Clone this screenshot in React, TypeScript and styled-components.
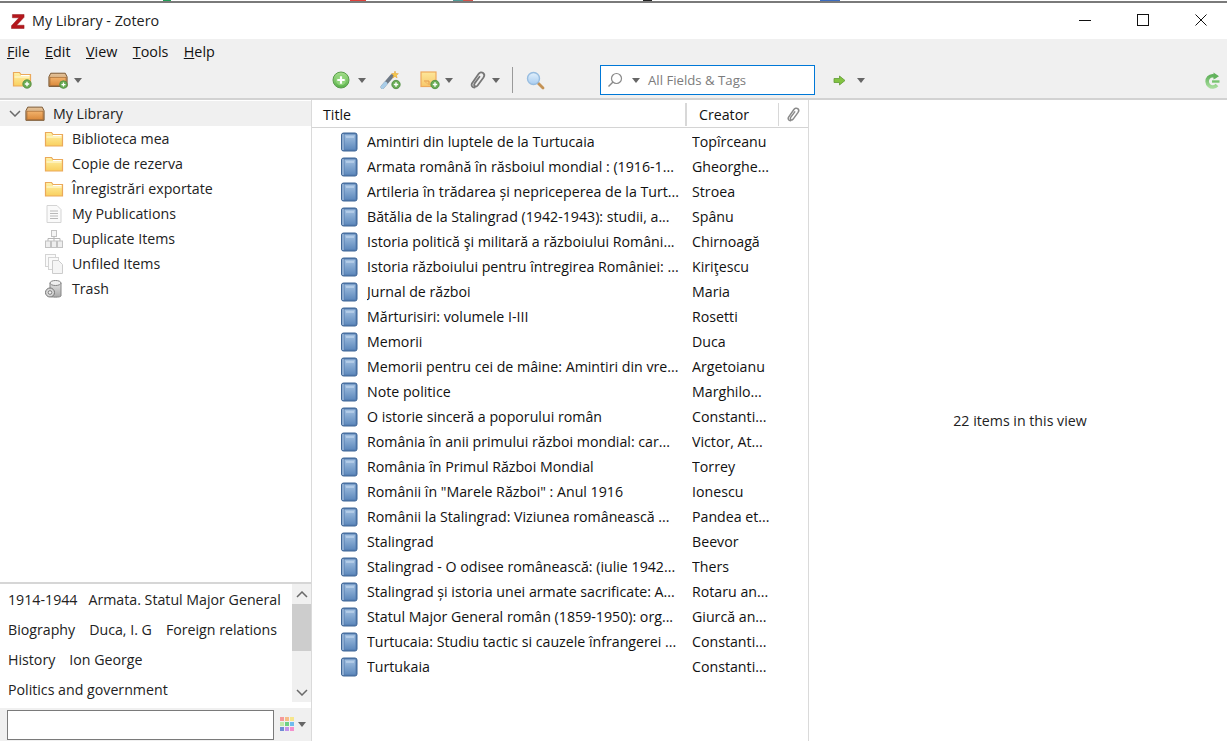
import React from "react";
import styled, { createGlobalStyle } from "styled-components";

const Global = createGlobalStyle`
  html, body { margin: 0; padding: 0; background: #fff; }
  body { font-family: "Open Sans", "Noto Sans", "Liberation Sans", sans-serif; color: #1a1a1a; overflow: hidden; }
  * { box-sizing: border-box; }
`;

const Window = styled.div`
  width: 1227px; height: 741px; display: flex; flex-direction: column; overflow: hidden; background: #fff;
`;
const TopEdge = styled.div`
  height: 3px; flex: none; background: #fff; border-bottom: 2px solid #7a7a7a; display: flex;
`;
const EdgeBit = styled.span<{ $w: number; $c?: string }>`
  width: ${(p) => p.$w}px; height: 1px; flex: none; background: ${(p) => p.$c ?? "transparent"};
`;
const TitleBar = styled.div`
  height: 36px; flex: none; display: flex; align-items: center; padding: 0 0 0 11px; background: #fff;
`;
const TitleText = styled.div`
  margin-left: 7px; font-size: 14.35px; color: #222; flex: 1; margin-top: -1px;
`;
const WinButtons = styled.div`
  display: flex; align-items: center; margin-right: 20px; gap: 46px; margin-top: -2px;
`;
const Menu = styled.div`
  height: 26px; flex: none; display: flex; align-items: center; padding: 0 0 2px 7px; gap: 15.4px; background: #f0f0f0;
  font-size: 14.35px; color: #111;
`;
const MenuItem = styled.span`
  &::first-letter { text-decoration: underline; }
`;
const Toolbar = styled.div`
  height: 35px; flex: none; display: flex; align-items: center; background: #f0f0f0; border-bottom: 2px solid #d2d2d2; padding-bottom: 3px;
`;
const ToolGroup = styled.div<{ $w: number; $pl?: number }>`
  width: ${(p) => p.$w}px; flex: none; display: flex; align-items: center; padding-left: ${(p) => p.$pl ?? 0}px; height: 100%;
`;
const ToolIcon = styled.div<{ $mr?: number }>`
  display: flex; align-items: center; margin-right: ${(p) => p.$mr ?? 0}px;
`;
const Spacer = styled.div`
  flex: 1;
`;
const Caret = styled.span<{ $mr?: number; $ml?: number }>`
  width: 0; height: 0; flex: none; border-left: 4.5px solid transparent; border-right: 4.5px solid transparent; border-top: 5px solid #666;
  margin-left: ${(p) => p.$ml ?? 6}px; margin-right: ${(p) => p.$mr ?? 0}px;
`;
const Divider = styled.span`
  width: 1px; height: 26px; background: #9a9a9a; margin: 0 13px 0 0; flex: none;
`;
const SearchBox = styled.div`
  width: 215px; height: 30px; flex: none; border: 1px solid #0078d7; background: #fff; display: flex; align-items: center; padding-left: 6px;
  font-size: 13.2px; color: #7c7c7c; margin-right: 18px;
`;
const Body = styled.div`
  flex: 1; min-height: 0; display: flex;
`;
const Left = styled.div`
  width: 312px; flex: none; border-right: 1px solid #dadada; display: flex; flex-direction: column;
`;
const Tree = styled.div`
  flex: 1; min-height: 0; padding-top: 1px;
`;
const LibRow = styled.div`
  height: 25px; background: #f0f0f0; display: flex; align-items: center; padding-left: 9px; font-size: 14.2px; color: #222;
`;
const ChevronGap = styled.span`
  width: 4px; flex: none;
`;
const TreeRow = styled.div`
  height: 25px; display: flex; align-items: center; padding-left: 44px; font-size: 14.2px; color: #222;
`;
const RowLabel = styled.span`
  margin-left: 8px;
`;
const TagPane = styled.div`
  height: 159px; flex: none; border-top: 2px solid #d6d6d6; display: flex; flex-direction: column;
`;
const TagArea = styled.div`
  height: 124px; flex: none; display: flex; background: #fff;
`;
const TagList = styled.div`
  width: 292px; flex: none; padding-left: 8px; font-size: 14.2px; color: #222;
`;
const TagLine = styled.div<{ $gap: number }>`
  height: 30px; display: flex; align-items: center; gap: ${(p) => p.$gap}px; white-space: nowrap;
`;
const Scrollbar = styled.div`
  width: 19px; height: 118px; flex: none; background: #f0f0f0; display: flex; flex-direction: column; justify-content: space-between; position: relative;
`;
const ScrollThumb = styled.div`
  position: absolute; left: 0; right: 0; top: 20px; height: 47px; background: #cdcdcd;
`;
const ScrollArrow = styled.div`
  height: 20px; display: flex; align-items: center; justify-content: center;
`;
const TagBottom = styled.div`
  flex: 1; display: flex; align-items: center; background: #f0f0f0; padding-left: 7px;
`;
const TagInput = styled.div`
  width: 267px; height: 30px; background: #fff; border: 1px solid #7a7a7a; margin-right: 6px;
`;
const Middle = styled.div`
  width: 497px; flex: none; border-right: 1px solid #dadada; display: flex; flex-direction: column;
`;
const HeadRow = styled.div`
  height: 28px; flex: none; border-bottom: 1px solid #d4d4d4; display: flex; align-items: center; font-size: 14.2px; color: #111; padding-top: 2px;
`;
const HeadTitle = styled.div`
  width: 375px; flex: none; padding-left: 11px; height: 23px; display: flex; align-items: center; border-right: 2px solid #d8d8d8;
`;
const HeadCreator = styled.div`
  width: 92px; flex: none; padding-left: 12px; height: 23px; display: flex; align-items: center; border-right: 1px solid #d8d8d8;
`;
const HeadClip = styled.div`
  flex: 1; display: flex; align-items: center; justify-content: center;
`;
const Rows = styled.div`
  flex: 1; padding-top: 1px;
`;
const Row = styled.div`
  height: 25px; display: flex; align-items: center; padding-left: 28px; font-size: 14.2px; color: #111; white-space: nowrap;
`;
const RowTitle = styled.span`
  width: 325px; flex: none; margin-left: 9px; overflow: hidden;
`;
const RowCreator = styled.span`
  flex: 1; overflow: hidden;
`;
const Right = styled.div`
  flex: 1; display: flex; align-items: center; justify-content: center; font-size: 14.2px; color: #222; padding: 0 0 1px 4px;
`;

const Svg = styled.svg`
  display: block; flex: none;
`;

const Grad = ({ id, a, b }: { id: string; a: string; b: string }) => (
  <linearGradient id={id} x1="0" y1="0" x2="0" y2="1">
    <stop offset="0" stopColor={a} />
    <stop offset="1" stopColor={b} />
  </linearGradient>
);

const PlusBadge = ({ x = 11, y = 11 }: { x?: number; y?: number }) => (
  <g>
    <circle cx={x} cy={y} r="4.2" fill="#6aac55" stroke="#4b8a3e" strokeWidth="0.8" />
    <path d={`M${x - 2.2} ${y}h4.4M${x} ${y - 2.2}v4.4`} stroke="#fff" strokeWidth="1.4" />
  </g>
);

const FolderIcon = ({ plus }: { plus?: boolean }) => (
  <Svg width={20} height={plus ? 18 : 16} viewBox={plus ? "0 0 20 18" : "0 0 20 16"}>
    <defs><Grad id="fold" a="#fff3a8" b="#f9cf5e" /></defs>
    <path d="M1.500 1.500h6l1.500 2h9.500v11.500h-17z" fill="url(#fold)" stroke="#eba95a" strokeWidth="1.200" />
    <path d="M2.500 6h15" stroke="#fffbe0" strokeWidth="1" />
    <path d="M9 4.500h8.500" stroke="#fff" strokeWidth="1" />
    {plus && <PlusBadge x={15} y={13} />}
  </Svg>
);

const BoxIcon = ({ plus }: { plus?: boolean }) => (
  <Svg width={20} height={plus ? 19 : 17} viewBox={plus ? "0 0 22 19" : "0 0 22 17"}>
    <defs>
      <Grad id="boxa" a="#e7c49a" b="#b98a55" />
      <Grad id="boxb" a="#f2b36d" b="#db8a3c" />
    </defs>
    <path d="M3 1.500h16l2 4v10.500H1V5.500z" fill="url(#boxa)" stroke="#7d5a35" strokeWidth="1.100" />
    <rect x="2.200" y="6" width="17.600" height="9" fill="url(#boxb)" stroke="#a66a32" strokeWidth="0.700" />
    {plus && <PlusBadge x={17} y={14} />}
  </Svg>
);

const AddItemIcon = () => (
  <Svg width="18" height="18" viewBox="0 0 18 18">
    <defs><Grad id="addg" a="#a6e08c" b="#58b04a" /></defs>
    <circle cx="9" cy="9" r="8" fill="url(#addg)" stroke="#5a9c4c" strokeWidth="1" />
    <circle cx="9" cy="9" r="5.200" fill="#8fd47a" />
    <path d="M5.300 9h7.400M9 5.300v7.400" stroke="#fff" strokeWidth="2.200" />
  </Svg>
);

const WandIcon = () => (
  <Svg width="22" height="20" viewBox="0 0 22 20">
    <path d="M2.500 17L12 6" stroke="#6d7885" strokeWidth="3.800" strokeLinecap="round" />
    <path d="M2.500 17L5.500 13.600" stroke="#a9cde8" strokeWidth="3.800" strokeLinecap="round" />
    <path d="M15 1l.8 2.500 2.600.2-2 1.600.7 2.600-2.100-1.500-2.200 1.400.8-2.500-2-1.700 2.600-.1z" fill="#f4c84a" stroke="#e09b2d" strokeWidth="0.500" />
    <PlusBadge x={16} y={14.500} />
  </Svg>
);

const NoteIcon = () => (
  <Svg width="21" height="19" viewBox="0 0 21 19">
    <defs><Grad id="noteg" a="#fde79b" b="#f8c86a" /></defs>
    <rect x="1" y="1" width="15" height="14.500" fill="url(#noteg)" stroke="#eeaa5c" strokeWidth="1.200" />
    <path d="M4 10h5v4" fill="none" stroke="#e39a4c" strokeWidth="1" />
    <path d="M4 10l5 4" stroke="#f2b565" strokeWidth="1" />
    <PlusBadge x={15} y={13.500} />
  </Svg>
);

const ClipIcon = ({ size = 18, c = "#777" }: { size?: number; c?: string }) => (
  <Svg width={size} height={size} viewBox="0 0 18 18">
    <path d="M5.500 16.500c-2.200 0-3.600-2-2.600-4L9.500 3c1.200-1.800 3.200-2.100 4.600-1 1.400 1.100 1.500 2.900.4 4.500L8.600 14.500c-.8 1-2 1.200-2.800.6-.8-.6-.8-1.700-.2-2.700L10.500 5.800" fill="none" stroke={c} strokeWidth="1.800" strokeLinecap="round" strokeLinejoin="round" />
  </Svg>
);

const MagnifyIcon = () => (
  <Svg width="19" height="19" viewBox="0 0 19 19">
    <defs><Grad id="magg" a="#e3f1fc" b="#a8ccf0" /></defs>
    <path d="M11.500 11.500L17 17" stroke="#c49255" strokeWidth="2.800" strokeLinecap="round" />
    <circle cx="7.500" cy="7.500" r="6" fill="url(#magg)" stroke="#98bde0" strokeWidth="1.400" />
  </Svg>
);

const SearchGlass = () => (
  <Svg width="16" height="16" viewBox="0 0 16 16">
    <circle cx="9.500" cy="6.500" r="5" fill="none" stroke="#8a8a8a" strokeWidth="1.200" />
    <path d="M6 10L1.500 14.500" stroke="#8a8a8a" strokeWidth="1.400" />
  </Svg>
);

const ArrowIcon = () => (
  <Svg width="13" height="11" viewBox="0 0 13 11">
    <path d="M1 3.500h5.500V1L12 5.500 6.500 10V7.500H1z" fill="#82c341" stroke="#5f9a35" strokeWidth="0.800" />
  </Svg>
);

const SyncIcon = () => (
  <Svg width="16" height="17" viewBox="0 0 16 17">
    <defs><Grad id="syncg" a="#62b25c" b="#a5dc9a" /></defs>
    <path d="M12.600 5.300A5.600 5.600 0 1 0 13 13" fill="none" stroke="url(#syncg)" strokeWidth="3.600" />
    <path d="M9.500 0.500l5.500 3.800-5.500 3.200z" fill="#62b25c" />
    <path d="M8 9.500h7.500" stroke="#78c46f" strokeWidth="2.400" />
  </Svg>
);

const ZoteroLogo = () => (
  <Svg width="14" height="17" viewBox="0 0 15 17">
    <path d="M1.500 1h12.500v3L6 12.500h8V16H0.500v-3L8.500 4.500H1.500z" fill="#b5171c" stroke="#8f1014" strokeWidth="0.500" />
  </Svg>
);

const DocIcon = () => (
  <Svg width="20" height="20" viewBox="0 0 20 20">
    <path d="M3 1.500h10l4 4v13H3z" fill="#fafafa" stroke="#d4d4d4" strokeWidth="1" />
    <path d="M6 7h8M6 9.500h8M6 12h8M6 14.500h8" stroke="#b8b8b8" strokeWidth="1" />
  </Svg>
);

const DupIcon = () => (
  <Svg width="20" height="20" viewBox="0 0 20 20">
    <rect x="7.500" y="1.500" width="5" height="6" fill="#f5f5f5" stroke="#c2c2c2" />
    <path d="M4 12V9.500h12V12M10 7.500V12" fill="none" stroke="#b5b5b5" />
    <rect x="1.500" y="12" width="5" height="6.500" fill="#eee" stroke="#c2c2c2" />
    <rect x="7.500" y="12" width="5" height="6.500" fill="#eee" stroke="#c2c2c2" />
    <rect x="13.500" y="12" width="5" height="6.500" fill="#eee" stroke="#c2c2c2" />
  </Svg>
);

const UnfiledIcon = () => (
  <Svg width="20" height="20" viewBox="0 0 20 20">
    <rect x="1.500" y="0.500" width="10" height="12" fill="#fafafa" stroke="#d4d4d4" />
    <rect x="4.500" y="3.500" width="10" height="12" fill="#fafafa" stroke="#d4d4d4" />
    <path d="M8.500 6.500h6l4 4v9h-10z" fill="#f5f5f5" stroke="#cccccc" />
  </Svg>
);

const TrashIcon = () => (
  <Svg width="20" height="20" viewBox="0 0 20 20">
    <defs><Grad id="trg" a="#e2e2e2" b="#a8a8a8" /></defs>
    <path d="M6 4v13c0 1.500 11 1.500 11 0V4z" fill="url(#trg)" stroke="#858585" />
    <ellipse cx="11.500" cy="4" rx="5.500" ry="2.500" fill="#efefef" stroke="#858585" />
    <circle cx="6" cy="13.500" r="4.500" fill="#d5d5d5" stroke="#757575" />
    <circle cx="6" cy="13.500" r="1.800" fill="#f4f4f4" stroke="#7d7d7d" />
  </Svg>
);

const BookIcon = () => (
  <Svg width="18" height="20" viewBox="0 0 18 20">
    <defs><Grad id="bookg" a="#a2c0e0" b="#5f8abd" /></defs>
    <rect x="1.500" y="1" width="15.500" height="18" rx="2" fill="#557db0" stroke="#3f6696" />
    <rect x="4.500" y="2.500" width="11" height="15" fill="url(#bookg)" />
    <path d="M3 2v16" stroke="#b6cde6" strokeWidth="1.200" />
    <path d="M6 5h8" stroke="#c4d8ee" strokeWidth="1.200" />
  </Svg>
);

const ColorGrid = () => {
  const colors = ["#f59a9a", "#f6bd86", "#f6e68c", "#c2eaaa", "#6fd084", "#70bcee", "#6f8cd6", "#c493ea", "#f490cc"];
  return (
    <Svg width="15" height="15" viewBox="0 0 15 15">
      {colors.map((c, i) => (
        <rect key={c} x={(i % 3) * 5} y={Math.floor(i / 3) * 5} width="4" height="4" fill={c} />
      ))}
    </Svg>
  );
};

const Chevron = ({ dir }: { dir: "up" | "down" }) => (
  <Svg width="12" height="7" viewBox="0 0 12 7">
    <path d={dir === "up" ? "M1 6l5-5 5 5" : "M1 1l5 5 5-5"} fill="none" stroke="#6a6a6a" strokeWidth="1.500" />
  </Svg>
);

const MinIcon = () => (
  <Svg width="12" height="12" viewBox="0 0 12 12"><path d="M0 6.500h12" stroke="#111" /></Svg>
);
const MaxIcon = () => (
  <Svg width="12" height="12" viewBox="0 0 12 12"><rect x="0.500" y="0.500" width="11" height="11" fill="none" stroke="#111" /></Svg>
);
const CloseIcon = () => (
  <Svg width="12" height="12" viewBox="0 0 12 12"><path d="M0.500 0.500l11 11M11.500 0.500l-11 11" stroke="#111" /></Svg>
);

const edgeBits: [number, string | undefined][] = [
  [163, undefined], [8, "#1f9d55"], [179, undefined], [16, "#e0403a"], [87, undefined],
  [10, "#4f9a96"], [10, "#d0524a"], [170, undefined], [9, "#222"], [168, undefined], [20, "#3a6cc0"],
];

const items: [string, string][] = [
  ["Amintiri din luptele de la Turtucaia", "Topîrceanu"],
  ["Armata română în răsboiul mondial : (1916-1...", "Gheorghe..."],
  ["Artileria în trădarea și nepriceperea de la Turt...", "Stroea"],
  ["Bătălia de la Stalingrad (1942-1943): studii, a...", "Spânu"],
  ["Istoria politică şi militară a războiului Români...", "Chirnoagă"],
  ["Istoria războiului pentru întregirea României: ...", "Kiriţescu"],
  ["Jurnal de război", "Maria"],
  ["Mărturisiri: volumele I-III", "Rosetti"],
  ["Memorii", "Duca"],
  ["Memorii pentru cei de mâine: Amintiri din vre...", "Argetoianu"],
  ["Note politice", "Marghilo..."],
  ["O istorie sinceră a poporului român", "Constanti..."],
  ["România în anii primului război mondial: car...", "Victor, At..."],
  ["România în Primul Război Mondial", "Torrey"],
  ["Românii în \"Marele Război\" : Anul 1916", "Ionescu"],
  ["Românii la Stalingrad: Viziunea românească ...", "Pandea et..."],
  ["Stalingrad", "Beevor"],
  ["Stalingrad - O odisee românească: (iulie 1942...", "Thers"],
  ["Stalingrad și istoria unei armate sacrificate: A...", "Rotaru an..."],
  ["Statul Major General român (1859-1950): org...", "Giurcă an..."],
  ["Turtucaia: Studiu tactic si cauzele înfrangerei ...", "Constanti..."],
  ["Turtukaia", "Constanti..."],
];

const tree: [React.ReactNode, string][] = [
  [<FolderIcon key="a" />, "Biblioteca mea"],
  [<FolderIcon key="b" />, "Copie de rezerva"],
  [<FolderIcon key="c" />, "Înregistrări exportate"],
  [<DocIcon key="d" />, "My Publications"],
  [<DupIcon key="e" />, "Duplicate Items"],
  [<UnfiledIcon key="f" />, "Unfiled Items"],
  [<TrashIcon key="g" />, "Trash"],
];

const tags: { gap: number; names: string[] }[] = [
  { gap: 11, names: ["1914-1944", "Armata. Statul Major General"] },
  { gap: 14, names: ["Biography", "Duca, I. G", "Foreign relations"] },
  { gap: 14, names: ["History", "Ion George"] },
  { gap: 14, names: ["Politics and government"] },
];

export default function App() {
  return (
    <Window>
      <Global />
      <TopEdge>
        {edgeBits.map(([w, c], i) => (
          <EdgeBit key={i} $w={w} $c={c} />
        ))}
      </TopEdge>
      <TitleBar>
        <ZoteroLogo />
        <TitleText>My Library - Zotero</TitleText>
        <WinButtons>
          <MinIcon />
          <MaxIcon />
          <CloseIcon />
        </WinButtons>
      </TitleBar>
      <Menu>
        {["File", "Edit", "View", "Tools", "Help"].map((m) => (
          <MenuItem key={m}>{m}</MenuItem>
        ))}
      </Menu>
      <Toolbar>
        <ToolGroup $w={332} $pl={12}>
          <ToolIcon $mr={16}><FolderIcon plus /></ToolIcon>
          <ToolIcon><BoxIcon plus /></ToolIcon>
          <Caret />
        </ToolGroup>
        <ToolGroup $w={268}>
          <ToolIcon><AddItemIcon /></ToolIcon>
          <Caret $ml={8} $mr={14} />
          <ToolIcon $mr={18}><WandIcon /></ToolIcon>
          <ToolIcon><NoteIcon /></ToolIcon>
          <Caret $ml={4} $mr={16} />
          <ToolIcon><ClipIcon /></ToolIcon>
          <Caret $ml={5} $mr={12} />
          <Divider />
          <ToolIcon><MagnifyIcon /></ToolIcon>
        </ToolGroup>
        <SearchBox>
          <SearchGlass />
          <Caret $ml={9} $mr={8} />
          All Fields &amp; Tags
        </SearchBox>
        <ToolIcon><ArrowIcon /></ToolIcon>
        <Caret $ml={11} />
        <Spacer />
        <ToolIcon $mr={7}><SyncIcon /></ToolIcon>
      </Toolbar>
      <Body>
        <Left>
          <Tree>
            <LibRow>
              <Chevron dir="down" />
              <ChevronGap />
              <BoxIcon />
              <RowLabel>My Library</RowLabel>
            </LibRow>
            {tree.map(([icon, label]) => (
              <TreeRow key={label}>
                {icon}
                <RowLabel>{label}</RowLabel>
              </TreeRow>
            ))}
          </Tree>
          <TagPane>
            <TagArea>
              <TagList>
                {tags.map((line) => (
                  <TagLine key={line.names[0]} $gap={line.gap}>
                    {line.names.map((t) => <span key={t}>{t}</span>)}
                  </TagLine>
                ))}
              </TagList>
              <Scrollbar>
                <ScrollArrow><Chevron dir="up" /></ScrollArrow>
                <ScrollThumb />
                <ScrollArrow><Chevron dir="down" /></ScrollArrow>
              </Scrollbar>
            </TagArea>
            <TagBottom>
              <TagInput />
              <ColorGrid />
              <Caret $ml={3} />
            </TagBottom>
          </TagPane>
        </Left>
        <Middle>
          <HeadRow>
            <HeadTitle>Title</HeadTitle>
            <HeadCreator>Creator</HeadCreator>
            <HeadClip><ClipIcon size={15} c="#8a8a8a" /></HeadClip>
          </HeadRow>
          <Rows>
            {items.map(([t, c]) => (
              <Row key={t}>
                <BookIcon />
                <RowTitle>{t}</RowTitle>
                <RowCreator>{c}</RowCreator>
              </Row>
            ))}
          </Rows>
        </Middle>
        <Right>22 items in this view</Right>
      </Body>
    </Window>
  );
}
